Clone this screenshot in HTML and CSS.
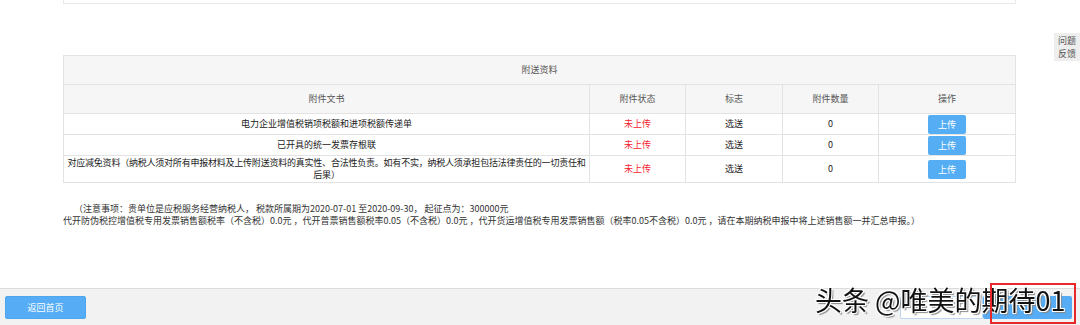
FILE: index.html
```html
<!DOCTYPE html>
<html lang="zh-CN">
<head>
    <meta charset="UTF-8">
    <meta name="viewport" content="width=device-width, initial-scale=1.0">
    <title>附送资料</title>
    <link rel="stylesheet" href="styles.css">
</head>
<body>
    <div class="page">
        <div class="top-box"></div>

        <table class="attach">
            <tr>
                <th colspan="5" class="title">附送资料</th>
            </tr>
            <tr>
                <th class="c-doc">附件文书</th>
                <th class="c-state">附件状态</th>
                <th class="c-flag">标志</th>
                <th class="c-num">附件数量</th>
                <th class="c-op">操作</th>
            </tr>
            <tr>
                <td>电力企业增值税销项税额和进项税额传递单</td>
                <td class="red">未上传</td>
                <td>选送</td>
                <td>0</td>
                <td><button class="btn-up">上传</button></td>
            </tr>
            <tr>
                <td>已开具的统一发票存根联</td>
                <td class="red">未上传</td>
                <td>选送</td>
                <td>0</td>
                <td><button class="btn-up">上传</button></td>
            </tr>
            <tr class="tall">
                <td class="long">对应减免资料（纳税人须对所有申报材料及上传附送资料的真实性、合法性负责。如有不实，纳税人须承担包括法律责任的一切责任和后果）</td>
                <td class="red">未上传</td>
                <td>选送</td>
                <td>0</td>
                <td><button class="btn-up">上传</button></td>
            </tr>
        </table>

        <div class="notes">
            <p class="first">（注意事项：贵单位是应税服务经营纳税人， 税款所属期为2020-07-01 至2020-09-30， 起征点为：300000元</p>
            <p>代开防伪税控增值税专用发票销售额税率（不含税）0.0元 ，代开普票销售额税率0.05（不含税）0.0元 ，代开货运增值税专用发票销售额（税率0.05不含税）0.0元 ，请在本期纳税申报中将上述销售额一并汇总申报。）</p>
        </div>
    </div>

    <div class="side-tab">问题<br>反馈</div>

    <div class="footer">
        <button class="btn-back">返回首页</button>
        <div class="footer-right">
            <button class="btn-plain"></button>
            <button class="btn-blue"></button>
        </div>
    </div>

    <div class="watermark">头条 @唯美的期待01</div>
    <div class="mark-box"></div>
</body>
</html>
```

FILE: styles.css
```css
body {
    margin: 0;
    padding: 0;
    background-color: #fff;
    font-family: "Microsoft YaHei", "Noto Sans CJK SC", sans-serif;
    font-size: 9px;
    color: #333;
}
.page {
    padding: 0 64px 0 63px;
}
.top-box {
    height: 3px;
    border: 1px solid #e8e8e8;
    border-top: none;
}
.attach {
    width: 953px;
    margin-top: 51px;
    border-collapse: collapse;
    border: 1px solid #e3e3e3;
}
.attach th,
.attach td {
    border: 1px solid #e3e3e3;
    text-align: center;
    font-weight: normal;
    padding: 0 2px;
    line-height: 12px;
}
.attach th {
    background-color: #f6f6f6;
    color: #555;
    height: 28px;
}
.attach td {
    height: 20px;
    color: #222;
}
.attach tr.tall td {
    height: 26px;
}
.attach td.long {
    padding: 0 2px;
    letter-spacing: -0.22px;
}
.c-doc { width: 521px; }
.c-state { width: 91px; }
.c-flag { width: 92px; }
.c-num { width: 91px; }
.red {
    color: #f5222d !important;
}
.btn-up {
    width: 38px;
    height: 19px;
    border: none;
    border-radius: 2px;
    background-color: #55adf3;
    color: #fff;
    font-family: inherit;
    font-size: 9px;
    padding: 0;
    vertical-align: middle;
}
.notes {
    margin-top: 20px;
    color: #333;
}
.notes p {
    margin: 0;
    line-height: 12px;
}
.notes .first {
    padding-left: 11px;
}
.side-tab {
    position: fixed;
    right: 0;
    top: 33px;
    width: 26px;
    padding: 1px 0;
    background-color: #eeeeee;
    color: #555;
    font-size: 9px;
    line-height: 13px;
    text-align: center;
}
.footer {
    position: fixed;
    left: 0;
    right: 0;
    bottom: 0;
    height: 36px;
    border-top: 1px solid #dcdcdc;
    background-color: #f2f2f2;
    display: flex;
    align-items: center;
    justify-content: space-between;
    padding: 0 8px 0 5px;
}
.btn-back {
    width: 81px;
    height: 23px;
    border: 1px solid #4ea6ee;
    border-radius: 2px;
    background-color: #56adf5;
    color: #fff;
    font-family: inherit;
    font-size: 9px;
}
.footer-right {
    display: flex;
}
.btn-plain {
    width: 83px;
    height: 23px;
    border: 1px solid #bcd8f0;
    border-radius: 2px;
    background-color: #fff;
}
.btn-blue {
    width: 89px;
    height: 23px;
    border: none;
    border-radius: 2px;
    background-color: #56adf5;
}
.watermark {
    position: fixed;
    left: 815px;
    top: 283px;
    font-family: "Noto Sans CJK SC", sans-serif;
    font-size: 27px;
    line-height: 34px;
    color: #111;
    text-shadow: 1px 1px 0 #fff, -1px -1px 0 #fff, 1px -1px 0 #fff, -1px 1px 0 #fff, 2px 2px 1px #888;
}
.mark-box {
    position: fixed;
    left: 990px;
    top: 283px;
    width: 82px;
    height: 37px;
    border: 2px solid #e8282b;
}
```
